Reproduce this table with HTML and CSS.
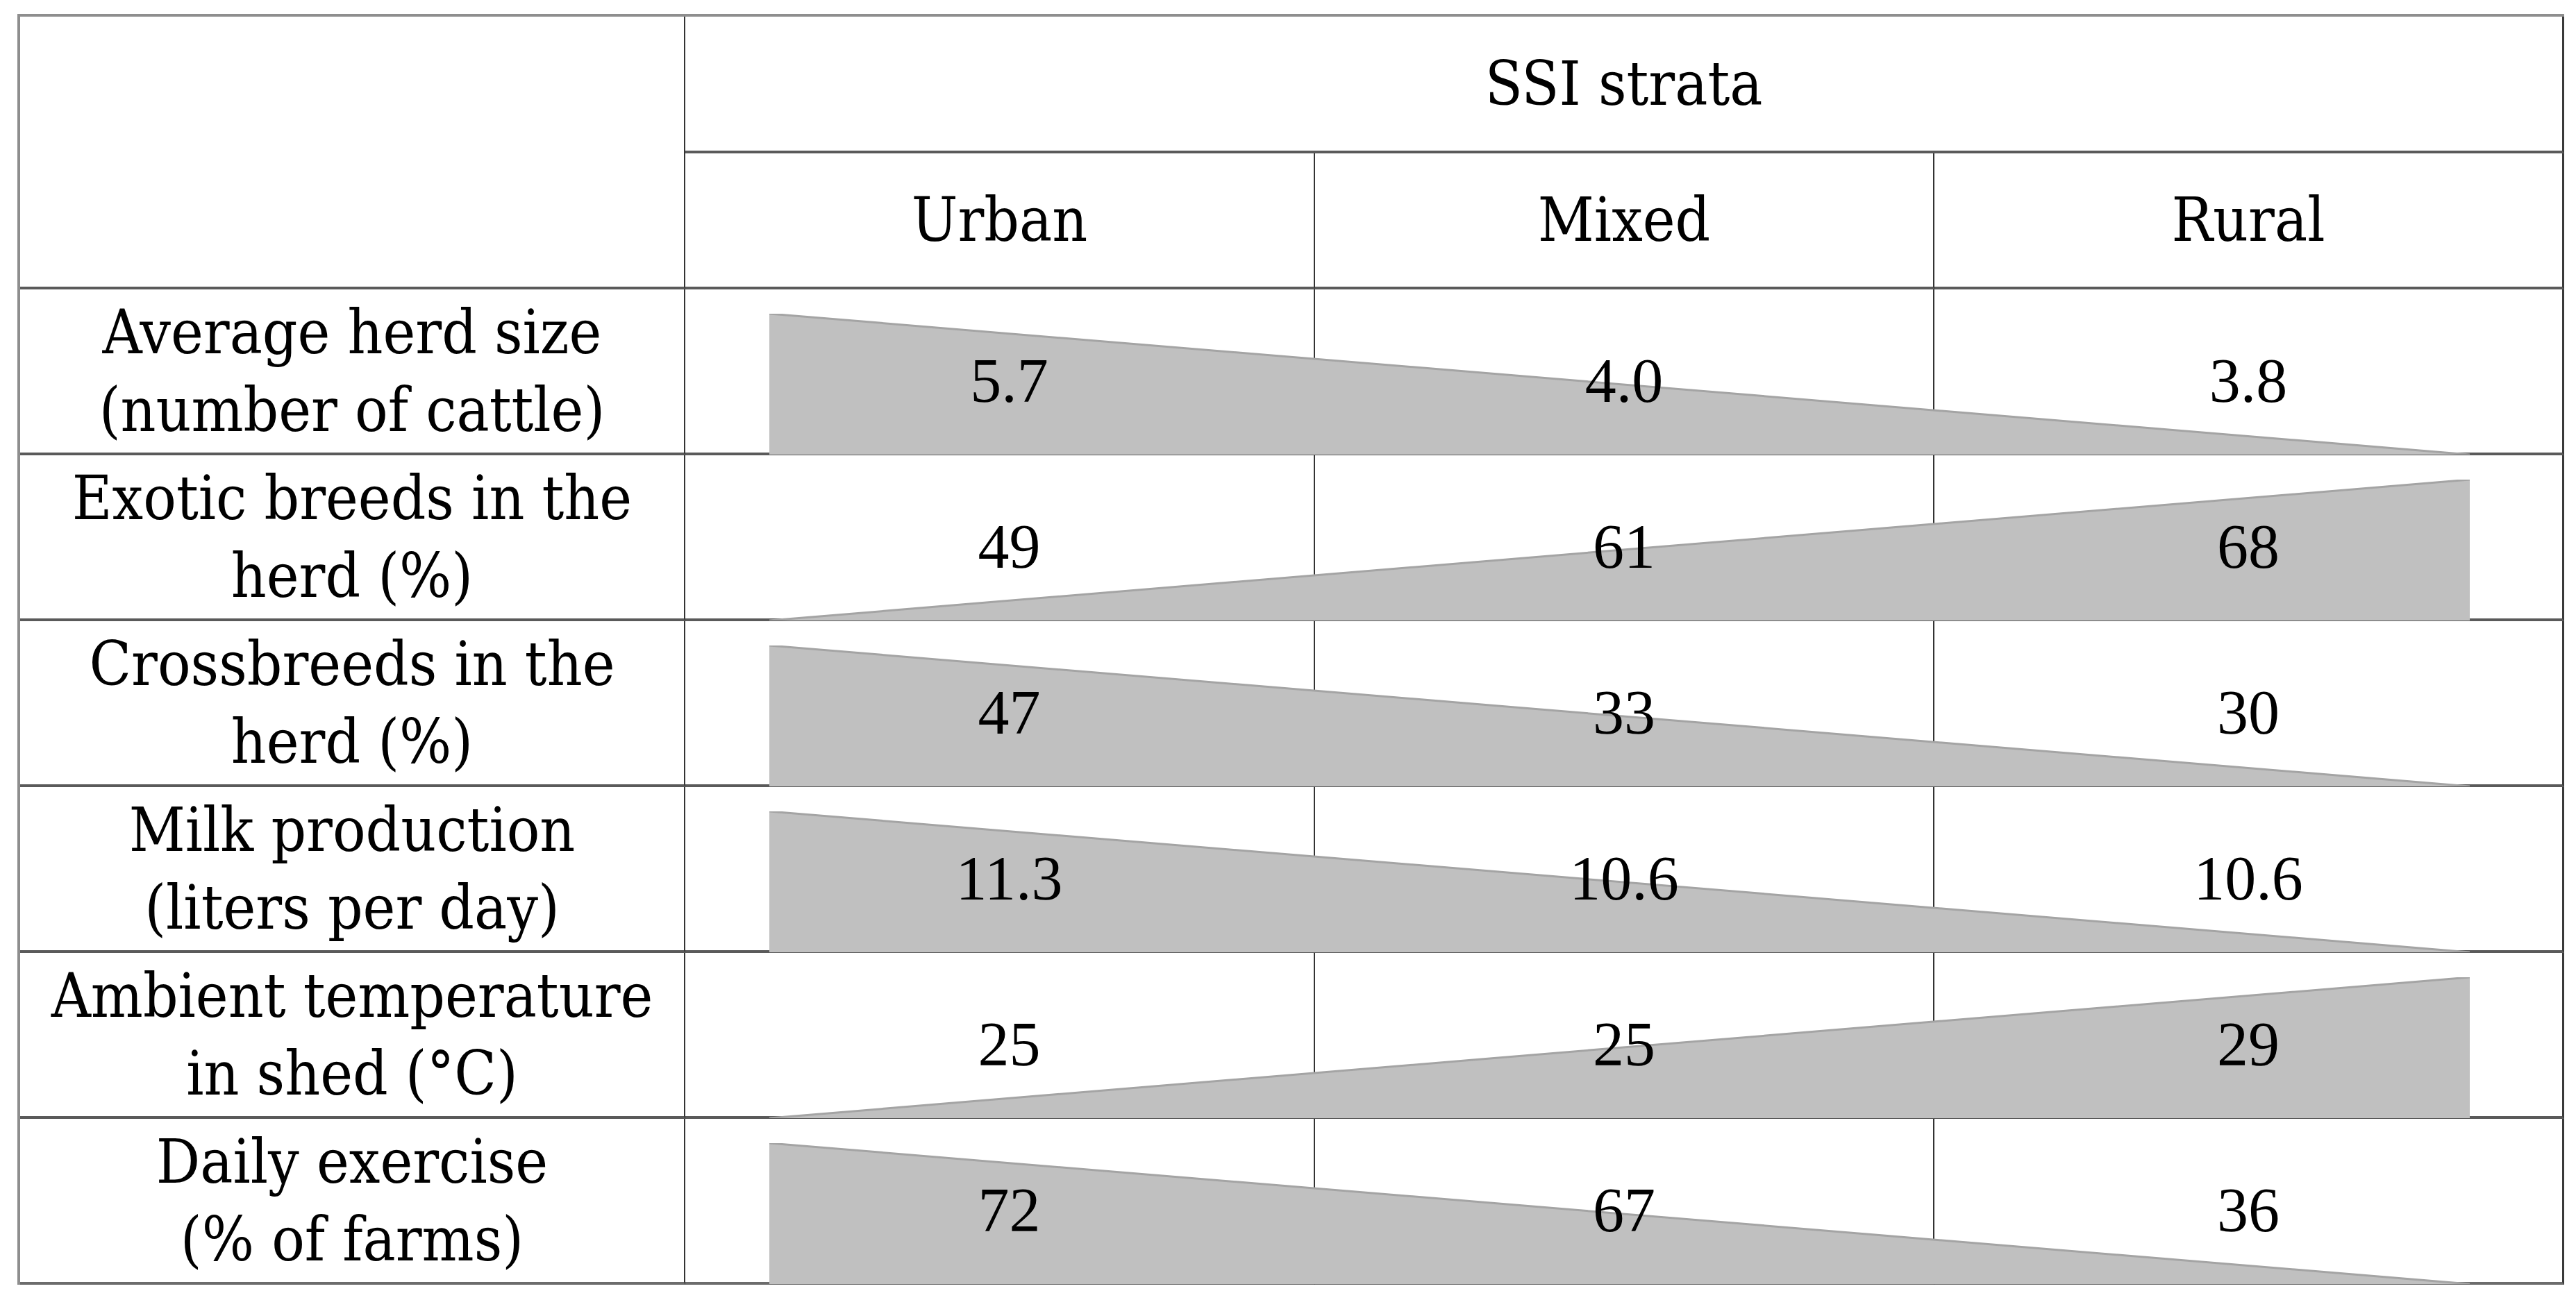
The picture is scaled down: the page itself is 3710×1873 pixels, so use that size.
FILE: index.html
```html
<!DOCTYPE html>
<html lang="en">
<head>
<meta charset="utf-8">
<title>SSI strata</title>
<link rel="stylesheet" href="styles.css">
</head>
<body>
<div class="table">
  <div class="head">
    <div class="cell corner"></div>
    <div class="cell strata last">SSI strata</div>
    <div class="cell hcell c2">Urban</div>
    <div class="cell hcell c3">Mixed</div>
    <div class="cell hcell c4 last">Rural</div>
  </div>

  <div class="row">
    <div class="cell label c1">Average herd size<br>(number of cattle)</div>
    <div class="cell num c2 urban"><span>5.7</span></div>
    <div class="cell num c3"><span>4.0</span></div>
    <div class="cell num c4 last"><span>3.8</span></div>
    <div class="wedge"><svg viewBox="0 0 100 100" preserveAspectRatio="none"><polygon class="fill" points="0,0 100,100 0,100"/><line class="edge" x1="0" y1="0" x2="100" y2="100"/></svg></div>
  </div>

  <div class="row">
    <div class="cell label c1">Exotic breeds in the<br>herd (%)</div>
    <div class="cell num c2 urban"><span>49</span></div>
    <div class="cell num c3"><span>61</span></div>
    <div class="cell num c4 last"><span>68</span></div>
    <div class="wedge"><svg viewBox="0 0 100 100" preserveAspectRatio="none"><polygon class="fill" points="100,0 100,100 0,100"/><line class="edge" x1="0" y1="100" x2="100" y2="0"/></svg></div>
  </div>

  <div class="row">
    <div class="cell label c1">Crossbreeds in the<br>herd (%)</div>
    <div class="cell num c2 urban"><span>47</span></div>
    <div class="cell num c3"><span>33</span></div>
    <div class="cell num c4 last"><span>30</span></div>
    <div class="wedge"><svg viewBox="0 0 100 100" preserveAspectRatio="none"><polygon class="fill" points="0,0 100,100 0,100"/><line class="edge" x1="0" y1="0" x2="100" y2="100"/></svg></div>
  </div>

  <div class="row">
    <div class="cell label c1">Milk production<br>(liters per day)</div>
    <div class="cell num c2 urban"><span>11.3</span></div>
    <div class="cell num c3"><span>10.6</span></div>
    <div class="cell num c4 last"><span>10.6</span></div>
    <div class="wedge"><svg viewBox="0 0 100 100" preserveAspectRatio="none"><polygon class="fill" points="0,0 100,100 0,100"/><line class="edge" x1="0" y1="0" x2="100" y2="100"/></svg></div>
  </div>

  <div class="row">
    <div class="cell label c1">Ambient temperature<br>in shed (°C)</div>
    <div class="cell num c2 urban"><span>25</span></div>
    <div class="cell num c3"><span>25</span></div>
    <div class="cell num c4 last"><span>29</span></div>
    <div class="wedge"><svg viewBox="0 0 100 100" preserveAspectRatio="none"><polygon class="fill" points="100,0 100,100 0,100"/><line class="edge" x1="0" y1="100" x2="100" y2="0"/></svg></div>
  </div>

  <div class="row">
    <div class="cell label c1">Daily exercise<br>(% of farms)</div>
    <div class="cell num c2 urban"><span>72</span></div>
    <div class="cell num c3"><span>67</span></div>
    <div class="cell num c4 last"><span>36</span></div>
    <div class="wedge"><svg viewBox="0 0 100 100" preserveAspectRatio="none"><polygon class="fill" points="0,0 100,100 0,100"/><line class="edge" x1="0" y1="0" x2="100" y2="100"/></svg></div>
  </div>
</div>
</body>
</html>
```
FILE: styles.css
```css
html, body {
  margin: 0;
  padding: 0;
  background: #ffffff;
}

.table {
  box-sizing: border-box;
  width: 3668px;
  margin: 20px 0 0 25px;
  border-top: 4px solid #8e8e8e;
  border-left: 4px solid #8e8e8e;
  color: #000;
}

.head,
.row {
  display: grid;
  grid-template-columns: 958px 907px 892px 907px;
}

.head {
  grid-template-rows: 197px 196px;
}

.row {
  grid-template-rows: 239px;
}

.cell {
  box-sizing: border-box;
  display: flex;
  align-items: center;
  justify-content: center;
  text-align: center;
  border-right: 2px solid #333;
  border-bottom: 4px solid #5a5a5a;
  white-space: nowrap;
}

.cell.last {
  border-right: 3px solid #3a3a3a;
}

.row:last-child .cell {
  border-bottom-color: #6c6c6c;
}

.corner {
  grid-column: 1;
  grid-row: 1 / 3;
}

.strata {
  grid-column: 2 / 5;
  grid-row: 1;
}

.hcell {
  grid-row: 2;
}

.row > .cell { grid-row: 1; }
.c1 { grid-column: 1; }
.c2 { grid-column: 2; }
.c3 { grid-column: 3; }
.c4 { grid-column: 4; }

.strata,
.hcell,
.label {
  font-family: "DejaVu Serif Condensed", "Liberation Serif", serif;
  font-stretch: condensed;
  font-size: 88px;
  line-height: 112px;
}

.num {
  font-family: "Liberation Serif", "Times New Roman", serif;
  font-size: 90px;
  line-height: 1;
  padding-top: 28px;
}

.num.urban {
  padding-left: 28px;
}

.num span {
  position: relative;
  z-index: 2;
}

.wedge {
  grid-row: 1;
  grid-column: 2 / 5;
  margin: 35px 136px 1px 121px;
  z-index: 1;
}

.wedge svg {
  display: block;
  width: 100%;
  height: 100%;
}

.wedge .fill {
  fill: #c0c0c0;
}

.wedge .edge {
  stroke: #a4a4a4;
  stroke-width: 3px;
  vector-effect: non-scaling-stroke;
}
```
